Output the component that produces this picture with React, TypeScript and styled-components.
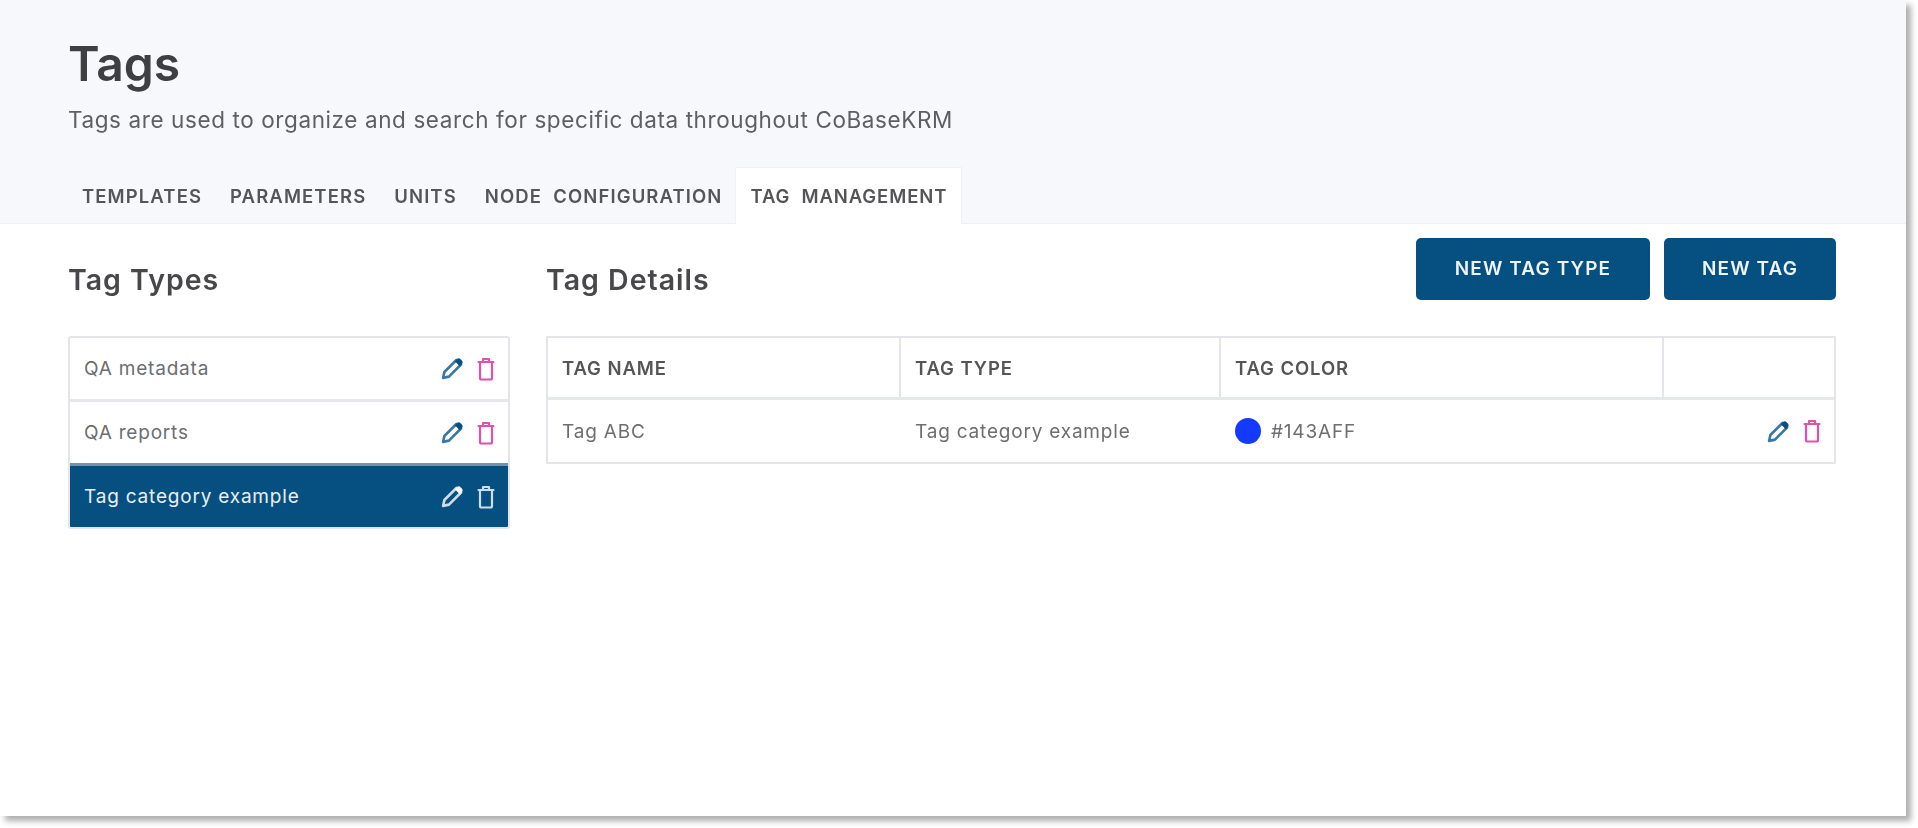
import React from "react";
import styled, { createGlobalStyle } from "styled-components";

const Global = createGlobalStyle`
  html, body { margin: 0; padding: 0; background: #fff; }
  body { font-family: "Inter", "Noto Sans", sans-serif; color: #4a4a4c; min-height: 828px; overflow: hidden; }
  * { box-sizing: border-box; }
`;

const Frame = styled.div`
  width: 1906px;
  height: 816px;
  background: #fff;
  box-shadow: 5px 5px 6px rgba(0, 0, 0, 0.32);
  display: flex;
  flex-direction: column;
  filter: blur(0.4px);
`;

const Header = styled.header`
  height: 224px;
  background: #f6f8fc;
  border-bottom: 1px solid #eef0f5;
  padding: 33px 0 0 68px;
  display: flex;
  flex-direction: column;
`;

const Title = styled.h1`
  margin: 0;
  font-size: 48px;
  line-height: 62px;
  font-weight: 600;
  color: #3f3f42;
`;

const Subtitle = styled.p`
  margin: 11px 0 0;
  font-size: 22.5px;
  line-height: 28px;
  letter-spacing: 0.6px;
  color: #5f5f63;
`;

const Tabs = styled.nav`
  margin-top: auto;
  display: flex;
  height: 56px;
  margin-bottom: -1px;
`;

const Tab = styled.div<{ $active?: boolean }>`
  display: flex;
  align-items: center;
  padding: 0 14px;
  font-size: 18.5px;
  font-weight: 600;
  letter-spacing: ${(p) => (p.$active ? 0.9 : 1.1)}px;
  word-spacing: 5.5px;
  color: #555558;
  white-space: nowrap;
  background: ${(p) => (p.$active ? "#fff" : "transparent")};
  box-shadow: ${(p) => (p.$active ? "0 0 0 1px #f0f1f6" : "none")};
  clip-path: inset(-2px -2px 0 -2px);
`;

const Body = styled.main`
  display: grid;
  grid-template-columns: 442px 1290px;
  column-gap: 36px;
  padding: 14px 0 0 68px;
`;

const Column = styled.section`
  display: flex;
  flex-direction: column;
`;

const HeadingRow = styled.div`
  height: 62px;
  margin-bottom: 36px;
  display: flex;
  align-items: flex-start;
  justify-content: space-between;
`;

const Heading = styled.h2`
  margin: 25px 0 0;
  font-size: 28.5px;
  line-height: 34px;
  font-weight: 600;
  letter-spacing: 1px;
  color: #48484b;
`;

const Actions = styled.div`
  display: flex;
  gap: 14px;
`;

const Button = styled.button<{ $w: number }>`
  width: ${(p) => p.$w}px;
  height: 62px;
  border: 0;
  border-radius: 5px;
  padding: 0 0 2px;
  background: #064f81;
  color: #eef4f8;
  font: 600 19px "Inter", sans-serif;
  letter-spacing: 1.1px;
`;

const List = styled.div`
  border: 2px solid #e4e5ea;
  border-radius: 3px;
  overflow: hidden;
`;

const ListRow = styled.div<{ $selected?: boolean }>`
  height: 64px;
  display: flex;
  align-items: center;
  justify-content: space-between;
  padding: 0 13px 0 14px;
  font-size: 19px;
  letter-spacing: 0.8px;
  color: ${(p) => (p.$selected ? "#e9eff4" : "#6d6d72")};
  background: ${(p) => (p.$selected ? "#064f81" : "#fff")};
  &:first-child {
    height: 61px;
  }
  &:not(:first-child) {
    border-top: 3px solid ${(p) => (p.$selected ? "#6f93ae" : "#e6e7ea")};
  }
`;

const Icons = styled.div`
  display: flex;
  align-items: center;
  gap: 12px;
`;

const Table = styled.div`
  border: 2px solid #e4e5ea;
`;

const TableRow = styled.div<{ $head?: boolean }>`
  display: grid;
  grid-template-columns: 353px 320px 443px 1fr;
  height: 62px;
  border-bottom: ${(p) => (p.$head ? "3px solid #e6e7ea" : "0")};
`;

const HeadCell = styled.div`
  display: flex;
  align-items: center;
  padding: 0 14px;
  font-size: 18.5px;
  font-weight: 600;
  letter-spacing: 0.9px;
  color: #555558;
  border-right: 2px solid #e4e5ea;
  &:last-child { border-right: 0; }
`;

const Cell = styled.div<{ $end?: boolean }>`
  display: flex;
  align-items: center;
  justify-content: ${(p) => (p.$end ? "flex-end" : "flex-start")};
  gap: 10px;
  padding: 0 ${(p) => (p.$end ? 13 : 14)}px 0 14px;
  font-size: 19px;
  letter-spacing: 0.8px;
  color: #6d6d72;
`;

const Swatch = styled.span`
  width: 26px;
  height: 26px;
  border-radius: 50%;
  background: #143aff;
`;

const Pencil = ({ color, tip }: { color: string; tip: string }) => (
  <svg width="25" height="25" viewBox="0 0 24 24" fill="none">
    <path d="M3 21l1.2-5.6L15.8 3.8l4.4 4.4L8.6 19.8z" stroke={color} strokeWidth="2.5" strokeLinejoin="round" />
    <path d="M16.2 3c1-1 2.6-1 3.6 0l1.2 1.2c1 1 1 2.6 0 3.6L19 9.8 14.2 5z" fill={tip} />
  </svg>
);

const Trash = ({ color }: { color: string }) => (
  <svg width="18" height="24" viewBox="0 0 18 24" fill="none" stroke={color} strokeWidth="2.2" strokeLinejoin="round">
    <path d="M1.5 5h15M6 5V2h6v3" strokeLinecap="round" />
    <path d="M3 5v16a1.5 1.5 0 0 0 1.5 1.5h9a1.5 1.5 0 0 0 1.5-1.5V5" />
  </svg>
);

const RowIcons = ({ light }: { light?: boolean }) => (
  <Icons>
    <Pencil color={light ? "#cfdce6" : "#3a77a6"} tip={light ? "#f4f7fa" : "#0b4f80"} />
    <Trash color={light ? "#cfdce6" : "#e052a8"} />
  </Icons>
);

const tabs = ["TEMPLATES", "PARAMETERS", "UNITS", "NODE CONFIGURATION"];
const types = ["QA metadata", "QA reports", "Tag category example"];

export default function App() {
  return (
    <Frame>
      <Global />
      <Header>
        <Title>Tags</Title>
        <Subtitle>Tags are used to organize and search for specific data throughout CoBaseKRM</Subtitle>
        <Tabs>
          {tabs.map((t) => (
            <Tab key={t}>{t}</Tab>
          ))}
          <Tab $active>TAG MANAGEMENT</Tab>
        </Tabs>
      </Header>
      <Body>
        <Column>
          <HeadingRow>
            <Heading>Tag Types</Heading>
          </HeadingRow>
          <List>
            {types.map((t, i) => (
              <ListRow key={t} $selected={i === 2}>
                {t}
                <RowIcons light={i === 2} />
              </ListRow>
            ))}
          </List>
        </Column>
        <Column>
          <HeadingRow>
            <Heading>Tag Details</Heading>
            <Actions>
              <Button $w={234}>NEW TAG TYPE</Button>
              <Button $w={172}>NEW TAG</Button>
            </Actions>
          </HeadingRow>
          <Table>
            <TableRow $head>
              <HeadCell>TAG NAME</HeadCell>
              <HeadCell>TAG TYPE</HeadCell>
              <HeadCell>TAG COLOR</HeadCell>
              <HeadCell />
            </TableRow>
            <TableRow>
              <Cell>Tag ABC</Cell>
              <Cell>Tag category example</Cell>
              <Cell>
                <Swatch />
                #143AFF
              </Cell>
              <Cell $end>
                <RowIcons />
              </Cell>
            </TableRow>
          </Table>
        </Column>
      </Body>
    </Frame>
  );
}
